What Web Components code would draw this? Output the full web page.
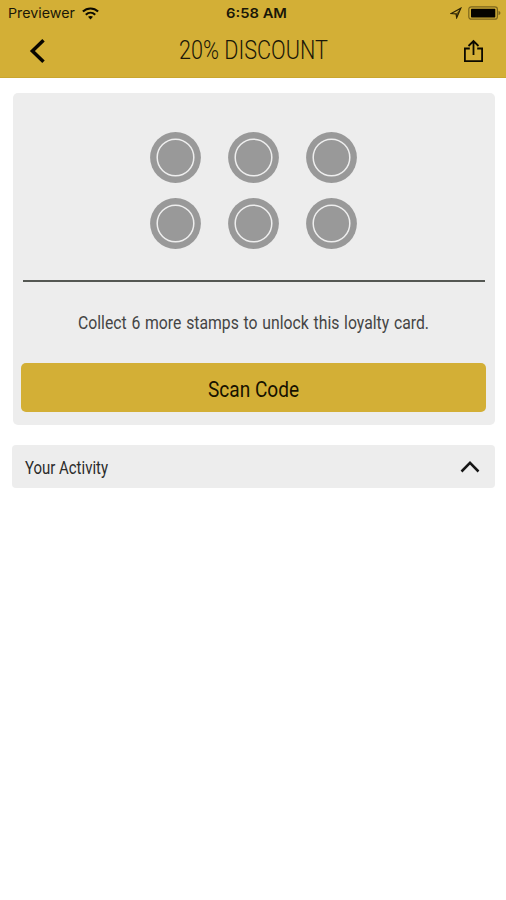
<!DOCTYPE html>
<html lang="en"><head><meta charset="utf-8"><title>Loyalty card</title>
<style>html,body{margin:0;background:#fff}body{height:900px;overflow:hidden;font-family:Roboto,"Liberation Sans",sans-serif;color:#1a1708}</style></head>
<body>
<loyalty-app></loyalty-app>
<script>
const define = (name, html, setup) => customElements.define(name, class extends HTMLElement {
  connectedCallback() {
    if (this.shadowRoot) return;
    const t = document.createElement('template');
    t.innerHTML = html;
    this.attachShadow({mode: 'open'}).append(t.content.cloneNode(true));
    if (setup) setup(this, this.shadowRoot);
  }
});

// One line of text condensed to a given width.
define('fit-text', `<style>:host{display:block;flex:none}svg{display:block;overflow:visible}text{fill:currentColor}</style><svg><text lengthAdjust="spacingAndGlyphs"></text></svg>`, (el, root) => {
  const w = el.getAttribute('width'), s = +el.getAttribute('size');
  const svg = root.querySelector('svg'), t = root.querySelector('text');
  svg.setAttribute('width', w); svg.setAttribute('height', s);
  t.setAttribute('y', s * 0.86 + +(el.getAttribute('shift') || 0)); t.setAttribute('textLength', w); t.setAttribute('font-size', s);
  t.textContent = el.getAttribute('label');
});

define('status-bar', `<style>
:host{display:grid;grid-template-columns:1fr auto 1fr;align-items:center;height:26px;padding:0 5px 0 8px;font-family:Inter,"Liberation Sans",sans-serif;box-sizing:border-box}
div{display:flex;align-items:center}.l{gap:7px}.r{justify-content:flex-end;gap:6px}.t{font-weight:600;padding-left:3px}svg{display:block}
</style>
<div class="l"><fit-text label="Previewer" width="67" size="13.5" shift=".4"></fit-text>
<svg width="17" height="13" viewBox="0 0 17 13" fill="none" stroke="#0c0a00" stroke-width="2.1"><path d="M.9 4.6C5.2.4 11.8.4 16.1 4.6M3.8 7.7c2.8-2.6 6.6-2.6 9.4 0"/><path d="M6 9.8c1.400-1.200 3.600-1.200 5 0L8.500 12.500z" fill="#0c0a00" stroke="none"/></svg></div>
<div class="t"><fit-text label="6:58 AM" width="61" size="13.5" shift=".4"></fit-text></div>
<div class="r"><svg width="12" height="12" viewBox="0 0 12 12"><path d="M1.200 6.500 10.800 1.200 6.700 10.700 6 6.800z" fill="none" stroke="#2a2205" stroke-width="1.200"/><path d="M10.800 1.200 6.700 10.700 6 6.800z" fill="#2a2205" fill-opacity=".6"/></svg>
<svg width="33" height="14" viewBox="0 0 33 14"><rect x=".8" y=".8" width="28.600" height="12.400" rx="2.500" fill="none" stroke="#7b661d" stroke-width="1.200"/><rect x="3" y="2.800" width="24.300" height="8.600" rx=".7" fill="#050400"/><path d="M30.500 4.700q2 .7 2 2.300t-2 2.300z" fill="#7b661d"/></svg></div>`);

define('nav-bar', `<style>
:host{display:grid;grid-template-columns:1fr auto 1fr;align-items:center;height:50px;padding:0 22px 0 29px;font-weight:300}
svg{display:block}.s{justify-self:end}fit-text{margin-left:-7px}
</style>
<svg width="17" height="26" viewBox="0 0 17 26"><path d="M14.500 2.300 3.400 13 14.500 23.700" fill="none" stroke="#080600" stroke-width="3.500"/></svg>
<fit-text label="20% DISCOUNT" width="149" size="25" shift="-1.500"></fit-text>
<svg class="s" width="22" height="26" viewBox="0 0 22 26" fill="none" stroke="#0c0a00" stroke-width="1.800"><path d="M7.800 10.500H2.900v12.600h17.200V10.500h-4.900M11.500 17V3.200M6.500 8l5-4.900 5 4.900"/></svg>`);

define('app-header', `<style>:host{display:block;height:78px;background:#d3af36;box-shadow:inset 0 -1px #c9a62f}</style><slot></slot>`);

define('stamp-slot', `<style>:host{display:block;width:51px;height:51px}svg{display:block}</style>
<svg width="51" height="51"><circle cx="25.500" cy="25.500" r="25.400" fill="#999"/><circle cx="25.500" cy="25.500" r="18.300" fill="none" stroke="#eee" stroke-width="1.500"/></svg>`);

define('stamp-grid', `<style>:host{display:grid;grid-template-columns:repeat(3,51px);gap:15px 27px;justify-content:center}</style>`, (el, root) => {
  for (let i = 0; i < +el.getAttribute('count'); i++) root.append(document.createElement('stamp-slot'));
});

define('action-button', `<style>:host{display:flex;align-items:center;justify-content:center;height:49px;border-radius:5px;background:#d3af36;color:#171200}</style><slot></slot>`);

define('loyalty-card', `<style>
:host{display:flex;flex-direction:column;box-sizing:border-box;height:332px;padding:38.500px 9px 13.500px;border-radius:5px;background:#ededed}
stamp-grid{margin-right:2px}
hr{width:462px;height:2px;border:0;margin:31.500px auto 31px;background:#555853}
.msg{align-self:center;color:#444;margin-right:2px;word-spacing:1px}action-button{margin:auto 0 0 -1px}
</style>
<stamp-grid count="6"></stamp-grid><hr>
<fit-text class="msg" label="Collect 6 more stamps to unlock this loyalty card." width="351" size="18.500" shift=".5"></fit-text>
<action-button><fit-text label="Scan Code" width="91" size="22.500" shift="1.200"></fit-text></action-button>`);

define('activity-panel', `<style>:host{display:flex;align-items:center;justify-content:space-between;box-sizing:border-box;height:43px;padding:0 14px 0 13px;border-radius:4px;background:#ededed;color:#2b2b2b}svg{display:block}</style>
<fit-text label="Your Activity" width="83" size="17.500" shift=".7"></fit-text>
<svg width="22" height="14" viewBox="0 0 22 14"><path d="M2.500 11.500 11 2.900 19.500 11.500" fill="none" stroke="#161616" stroke-width="2.500"/></svg>`);

define('loyalty-app', `<style>:host{display:block;width:506px}main{display:flex;flex-direction:column;gap:20px;padding:15px 11px 0 12px}loyalty-card{margin:0 0 0 1px}</style>
<app-header><status-bar></status-bar><nav-bar></nav-bar></app-header>
<main><loyalty-card></loyalty-card><activity-panel></activity-panel></main>`);
</script>
</body></html>
